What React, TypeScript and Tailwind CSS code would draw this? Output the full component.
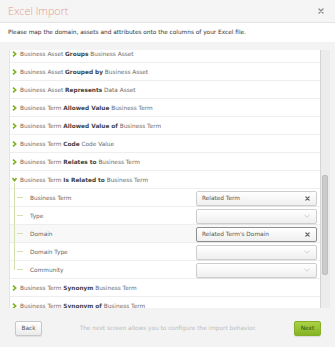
import React from "react";

type Rel = { a: string; b: string; c: string };

const before: Rel[] = [
  { a: "Business Asset", b: "Groups", c: "Business Asset" },
  { a: "Business Asset", b: "Grouped by", c: "Business Asset" },
  { a: "Business Asset", b: "Represents", c: "Data Asset" },
  { a: "Business Term", b: "Allowed Value", c: "Business Term" },
  { a: "Business Term", b: "Allowed Value of", c: "Business Term" },
  { a: "Business Term", b: "Code", c: "Code Value" },
  { a: "Business Term", b: "Relates to", c: "Business Term" },
];

const after: Rel[] = [
  { a: "Business Term", b: "Synonym", c: "Business Term" },
  { a: "Business Term", b: "Synonym of", c: "Business Term" },
];

type Sub = { label: string; value?: string; focused?: boolean; hl?: boolean };
const subs: Sub[] = [
  { label: "Business Term", value: "Related Term" },
  { label: "Type" },
  { label: "Domain", value: "Related Term's Domain", focused: true, hl: true },
  { label: "Domain Type" },
  { label: "Community" },
];

function ChevronRight() {
  return (
    <svg width="5" height="6" viewBox="0 0 5 6" className="shrink-0">
      <path d="M1 0.6 L3.7 3 L1 5.4" fill="none" stroke="#7cae1e" strokeWidth="1.6" />
    </svg>
  );
}

function ChevronDown() {
  return (
    <svg width="5" height="5" viewBox="0 0 5 5" className="shrink-0">
      <path d="M0.5 1 L2.5 3.6 L4.5 1" fill="none" stroke="#7cae1e" strokeWidth="1.6" />
    </svg>
  );
}

function SmallX({ color, size }: { color: string; size: number }) {
  return (
    <svg width={size} height={size} viewBox="0 0 6 6" className="shrink-0">
      <path d="M1 1 L5 5 M5 1 L1 5" stroke={color} strokeWidth="1.4" strokeLinecap="round" />
    </svg>
  );
}

function SelectArrow() {
  return (
    <svg width="6" height="4" viewBox="0 0 6 4" className="shrink-0">
      <path d="M0.5 0.8 L3 3.2 L5.5 0.8" fill="none" stroke="#c4c4c4" strokeWidth="0.8" />
    </svg>
  );
}

function RelRow({ r }: { r: Rel }) {
  return (
    <div className="flex h-[18px] shrink-0 items-center pl-[2px] shadow-[inset_0_-1px_0_#eeeeee]">
      <ChevronRight />
      <span className="ml-[3px] whitespace-nowrap text-[#6b6b6b]">
        {r.a} <b className="font-bold text-[#3f3f3f]">{r.b}</b> {r.c}
      </span>
    </div>
  );
}

function SubRow({ s, last }: { s: Sub; last: boolean }) {
  return (
    <div
      className={`flex h-[18px] shrink-0 items-stretch shadow-[inset_0_-1px_0_#eeeeee] ${
        s.hl ? "bg-[#f8f8f8]" : "bg-white"
      }`}
    >
      <div className="ml-[4px] flex w-[9px] flex-col">
        <div className="flex h-[9px] items-end border-l border-[#d2e2aa]">
          <div className="ml-[2px] h-px w-[7px] bg-[#d2e2aa]" />
        </div>
        <div className={`flex-1 ${last ? "" : "border-l border-[#d2e2aa]"}`} />
      </div>
      <div className="ml-[7px] flex flex-1 items-center whitespace-nowrap text-[#666666]">{s.label}</div>
      <div className="flex items-center pr-[3px]">
        <div
          className={`flex h-[15px] w-[121px] items-center justify-between rounded-[2px] border bg-gradient-to-b from-white to-[#efefef] pl-[5px] pr-[6px] shadow-[0_1px_1px_rgba(0,0,0,0.05)] ${
            s.focused ? "border-[#8f8f8f]" : "border-[#cdcdcd]"
          }`}
        >
          <span className="whitespace-nowrap text-[#555555]">{s.value ?? ""}</span>
          {s.value ? <SmallX color="#5a5a5a" size={5} /> : <SelectArrow />}
        </div>
      </div>
    </div>
  );
}

function ExpandedRow() {
  return (
    <div className="flex h-[18px] shrink-0 items-stretch pl-[2px] shadow-[inset_0_-1px_0_#eeeeee]">
      <div className="flex w-[5px] flex-col items-center pt-[6px]">
        <ChevronDown />
        <div className="mt-px w-px flex-1 bg-[#d2e2aa]" />
      </div>
      <div className="ml-[3px] flex items-center whitespace-nowrap text-[#6b6b6b]">
        Business Term&nbsp;<b className="font-bold text-[#3f3f3f]">Is Related to</b>&nbsp;Business Term
      </div>
    </div>
  );
}

export default function App() {
  return (
    <div className="flex h-[347px] w-[335px] flex-col overflow-hidden bg-[#f3f3f3] font-['DejaVu_Sans',sans-serif] text-[5.8px]">
      <div className="flex h-[23px] shrink-0 items-center justify-between border-b border-[#e3e3e3] bg-[#f5f5f5] pl-[8px] pr-[11px]">
        <span className="font-['Open_Sans',sans-serif] text-[10.8px] font-light leading-none text-[#e49d8b]">
          Excel Import
        </span>
        <SmallX color="#8d8d8d" size={6} />
      </div>
      <div className="flex h-[19px] shrink-0 items-center bg-white pl-[8px] text-[#333333]">
        Please map the domain, assets and attributes onto the columns of your Excel file.
      </div>
      <div className="flex shrink-0 pl-[9px] pt-[8px]">
        <div className="h-[258px] w-[311px] overflow-hidden border-l border-[#e4e4e4] bg-white">
          <div className="-mt-[5px] flex flex-col">
            {before.map((r, i) => (
              <RelRow key={i} r={r} />
            ))}
            <ExpandedRow />
            {subs.map((s, i) => (
              <SubRow key={i} s={s} last={i === subs.length - 1} />
            ))}
            {after.map((r, i) => (
              <RelRow key={i} r={r} />
            ))}
          </div>
        </div>
        <div className="h-[258px] w-[10px] border-l border-[#d4d4d4] bg-[#ececec] pl-px pt-[125px]">
          <div className="h-[100px] w-[6px] rounded-[2px] border border-[#bdbdbd] bg-[#cbcbcb]" />
        </div>
      </div>
      <div className="flex flex-1 items-start px-[14px] pl-[15px] pt-[13px]">
        <button className="flex h-[15px] w-[27px] items-center justify-center rounded-[2px] border border-[#c8c8c8] bg-gradient-to-b from-white to-[#ebebeb] text-[#555555] shadow-[0_1px_1px_rgba(0,0,0,0.08)]">
          Back
        </button>
        <div className="flex h-[15px] flex-1 items-center justify-center whitespace-nowrap text-[#bcbcbc]">
          The next screen allows you to configure the import behavior.
        </div>
        <button className="flex h-[15px] w-[27px] items-center justify-center rounded-[2px] border border-[#86ad27] bg-gradient-to-b from-[#a9d244] to-[#84b424] text-[#3a4d12] shadow-[0_1px_1px_rgba(0,0,0,0.1)]">
          Next
        </button>
      </div>
    </div>
  );
}
